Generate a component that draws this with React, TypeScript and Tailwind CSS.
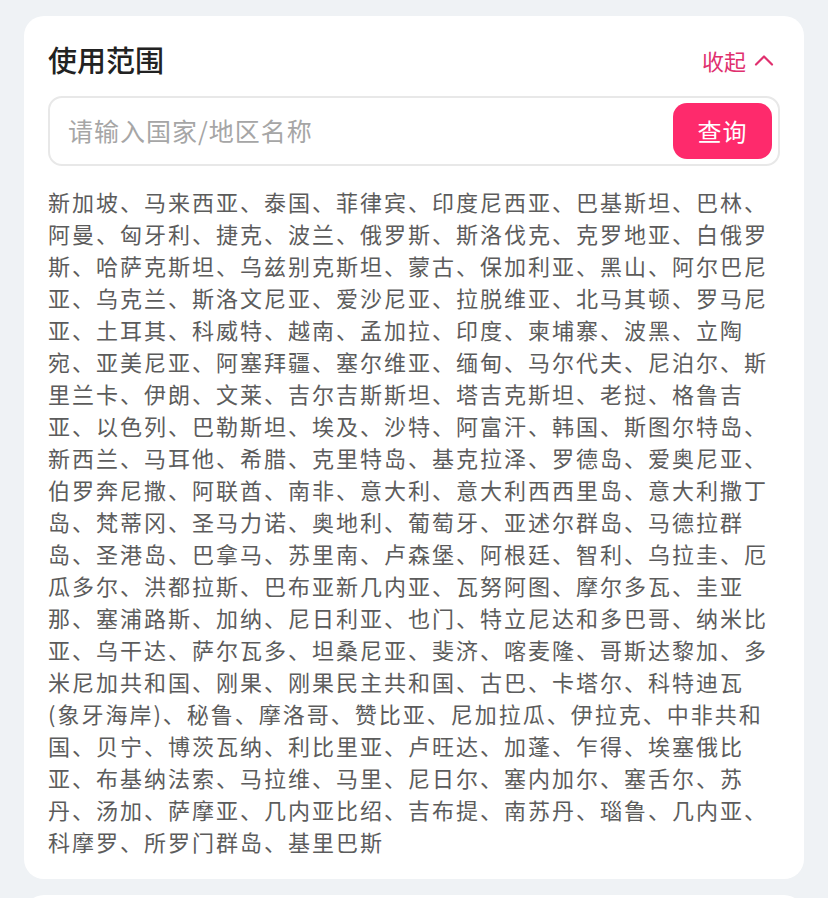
import { useState } from 'react'

const COUNTRIES =
  '新加坡、马来西亚、泰国、菲律宾、印度尼西亚、巴基斯坦、巴林、阿曼、匈牙利、捷克、波兰、俄罗斯、斯洛伐克、克罗地亚、白俄罗斯、哈萨克斯坦、乌兹别克斯坦、蒙古、保加利亚、黑山、阿尔巴尼亚、乌克兰、斯洛文尼亚、爱沙尼亚、拉脱维亚、北马其顿、罗马尼亚、土耳其、科威特、越南、孟加拉、印度、柬埔寨、波黑、立陶宛、亚美尼亚、阿塞拜疆、塞尔维亚、缅甸、马尔代夫、尼泊尔、斯里兰卡、伊朗、文莱、吉尔吉斯斯坦、塔吉克斯坦、老挝、格鲁吉亚、以色列、巴勒斯坦、埃及、沙特、阿富汗、韩国、斯图尔特岛、新西兰、马耳他、希腊、克里特岛、基克拉泽、罗德岛、爱奥尼亚、伯罗奔尼撒、阿联酋、南非、意大利、意大利西西里岛、意大利撒丁岛、梵蒂冈、圣马力诺、奥地利、葡萄牙、亚述尔群岛、马德拉群岛、圣港岛、巴拿马、苏里南、卢森堡、阿根廷、智利、乌拉圭、厄瓜多尔、洪都拉斯、巴布亚新几内亚、瓦努阿图、摩尔多瓦、圭亚那、塞浦路斯、加纳、尼日利亚、也门、特立尼达和多巴哥、纳米比亚、乌干达、萨尔瓦多、坦桑尼亚、斐济、喀麦隆、哥斯达黎加、多米尼加共和国、刚果、刚果民主共和国、古巴、卡塔尔、科特迪瓦(象牙海岸)、秘鲁、摩洛哥、赞比亚、尼加拉瓜、伊拉克、中非共和国、贝宁、博茨瓦纳、利比里亚、卢旺达、加蓬、乍得、埃塞俄比亚、布基纳法索、马拉维、马里、尼日尔、塞内加尔、塞舌尔、苏丹、汤加、萨摩亚、几内亚比绍、吉布提、南苏丹、瑙鲁、几内亚、科摩罗、所罗门群岛、基里巴斯'

export default function App() {
  const [keyword, setKeyword] = useState('')
  const [open, setOpen] = useState(true)

  return (
    <div
      className="min-h-screen bg-[#eff2f5] px-6 pt-4 pb-4"
      style={{ fontFamily: '"Noto Sans CJK SC", "Noto Sans", sans-serif' }}
    >
      {/* Scope card */}
      <div className="bg-white rounded-[20px] px-6 pt-6 pb-[22px]">
        <div className="flex justify-between items-center h-10">
          <h2 className="text-[29px] font-medium text-[#222]">使用范围</h2>
          <button
            onClick={() => setOpen(!open)}
            className="flex items-center gap-2 text-[22px] text-[#e0306e] mr-[6px]"
          >
            {open ? '收起' : '展开'}
            <svg width="20" height="12" viewBox="0 0 20 12" fill="none">
              <path
                d={open ? 'M2 10.5 L10 2.5 L18 10.5' : 'M2 1.5 L10 9.5 L18 1.5'}
                stroke="#e0306e"
                strokeWidth="2.2"
                strokeLinecap="round"
                strokeLinejoin="round"
              />
            </svg>
          </button>
        </div>

        <div className="mt-4 h-[70px] flex items-center border-2 border-[#e8e8e8] rounded-[14px] pl-[18px] pr-[6px]">
          <input
            value={keyword}
            onChange={(e) => setKeyword(e.target.value)}
            placeholder="请输入国家/地区名称"
            className="flex-1 min-w-0 bg-transparent outline-none text-[25px] tracking-[1px] text-[#333] placeholder:text-[#a6a6a6]"
          />
          <button className="w-[99px] h-[56px] rounded-[14px] bg-[#fe2a6c] text-white text-[24px] tracking-[1px]">
            查询
          </button>
        </div>

        {open && (
          <p className="mt-[19px] pr-2 text-[22px] leading-[32px] tracking-[2px] text-[#5c5c5c]">
            {COUNTRIES}
          </p>
        )}
      </div>

      {/* next card, cut off */}
      <div className="mt-4 bg-white rounded-[20px] h-[120px]"></div>
    </div>
  )
}
